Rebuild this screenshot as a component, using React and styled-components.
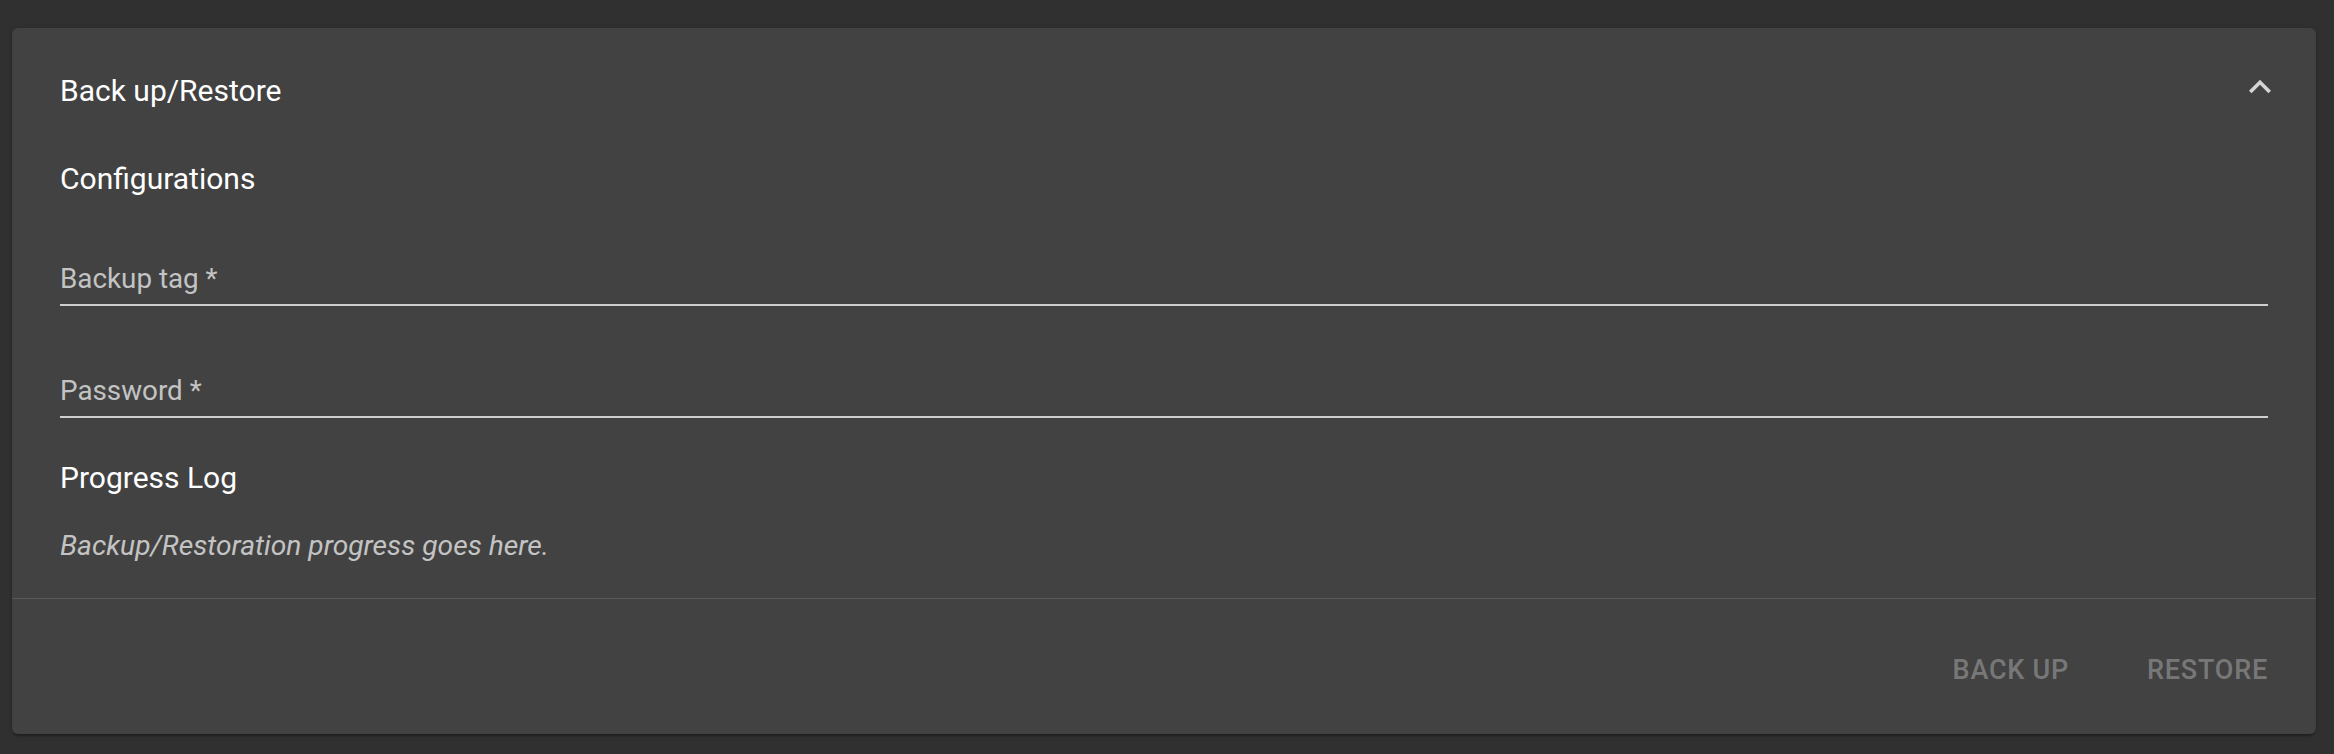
import React from "react";
import styled, { createGlobalStyle } from "styled-components";

const GlobalStyle = createGlobalStyle`
  html, body {
    margin: 0;
    padding: 0;
    background: #303030;
    font-family: Roboto, "Liberation Sans", Arial, sans-serif;
  }
`;

const Page = styled.div`
  padding: 28px 18px 19px 12px;
`;

const Card = styled.section`
  background: #424242;
  border-radius: 6px;
  box-shadow: 0px 3px 2px -1px rgba(0, 0, 0, 0.2),
    0px 1px 2px 0px rgba(0, 0, 0, 0.14), 0px 1px 5px 0px rgba(0, 0, 0, 0.12);
  color: #fff;
`;

const Summary = styled.div`
  height: 126px;
  display: flex;
  align-items: center;
  justify-content: space-between;
  padding: 0 34px 0 48px;
  cursor: pointer;
`;

const Title = styled.h2`
  margin: 0;
  font-size: 30px;
  font-weight: 400;
  line-height: 36px;
`;

const ExpandIcon = styled.svg`
  width: 44px;
  height: 44px;
  margin-bottom: 8px;
  fill: rgba(255, 255, 255, 0.78);
`;

const Details = styled.div`
  padding: 0 48px 36px;
  display: flex;
  flex-direction: column;
`;

const SectionTitle = styled.h3`
  margin: ${(p) => p.$top}px 0 0;
  font-size: 30px;
  font-weight: 400;
  line-height: 36px;
`;

const Input = styled.input`
  display: block;
  width: 100%;
  box-sizing: border-box;
  height: 44px;
  margin-top: ${(p) => p.$top}px;
  padding: 0 0 10px;
  background: transparent;
  border: none;
  border-bottom: 2px solid rgba(255, 255, 255, 0.75);
  color: #fff;
  font-family: inherit;
  font-size: 27.8px;
  line-height: 32px;
  outline: none;

  &::placeholder {
    color: rgba(255, 255, 255, 0.7);
    opacity: 1;
  }
`;

const LogText = styled.p`
  margin: 34px 0 0;
  font-size: 28.2px;
  font-style: italic;
  line-height: 32px;
  color: rgba(255, 255, 255, 0.7);
`;

const Actions = styled.div`
  box-sizing: border-box;
  height: 136px;
  border-top: 1px solid rgba(255, 255, 255, 0.12);
  display: flex;
  align-items: center;
  justify-content: flex-end;
  gap: 54px;
  padding: 6px 36px 0 0;
`;

const TextButton = styled.button`
  background: none;
  border: none;
  padding: 9px 12px;
  font-family: inherit;
  font-size: 27px;
  font-weight: 500;
  letter-spacing: 0.02857em;
  text-transform: uppercase;
  color: rgba(255, 255, 255, 0.3);
  cursor: default;
`;

export default function App() {
  return (
    <Page>
      <GlobalStyle />
      <Card>
        <Summary>
          <Title>Back up/Restore</Title>
          <ExpandIcon viewBox="0 0 24 24">
            <path d="M12 8l-6 6 1.41 1.41L12 10.83l4.59 4.58L18 14z" />
          </ExpandIcon>
        </Summary>
        <Details>
          <SectionTitle $top={7}>Configurations</SectionTitle>
          <Input $top={65} placeholder="Backup tag *" />
          <Input $top={68} type="password" placeholder="Password *" />
          <SectionTitle $top={42}>Progress Log</SectionTitle>
          <LogText>Backup/Restoration progress goes here.</LogText>
        </Details>
        <Actions>
          <TextButton disabled>Back up</TextButton>
          <TextButton disabled>Restore</TextButton>
        </Actions>
      </Card>
    </Page>
  );
}
